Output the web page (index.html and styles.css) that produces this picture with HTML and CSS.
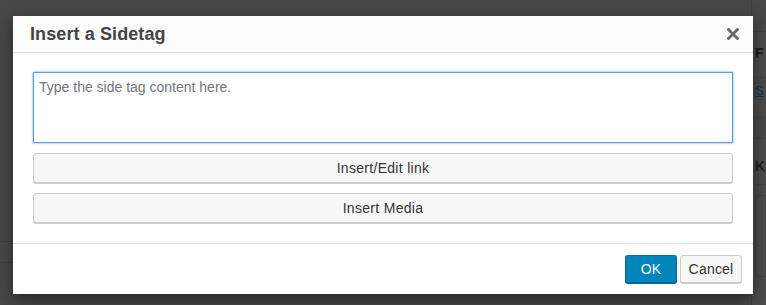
FILE: index.html
```html
<!DOCTYPE html>
<html lang="en">
<head>
  <meta charset="UTF-8">
  <title>Insert a Sidetag</title>
  <link rel="stylesheet" href="styles.css">
</head>
<body>
  <div class="backdrop">
    <div class="bg-main">
      <div class="bg-row"></div>
      <div class="bg-row"></div>
    </div>
    <div class="bg-side">
      <div class="side-box first">
        <div class="side-title">F</div>
        <a class="side-link">S</a>
      </div>
      <div class="side-box second">
        <div class="side-title">K</div>
        <div class="side-inner"></div>
      </div>
    </div>
  </div>

  <div class="modal">
    <div class="modal-head">
      <h1>Insert a Sidetag</h1>
      <button class="close" aria-label="Close">
        <svg width="12" height="12" viewBox="0 0 12 12">
          <path d="M1.5 1.5 L10.5 10.5 M10.5 1.5 L1.5 10.5" stroke="#666" stroke-width="2.8" stroke-linecap="square"/>
        </svg>
      </button>
    </div>
    <div class="modal-body">
      <textarea class="tag-text" placeholder="Type the side tag content here."></textarea>
      <button class="wide-button">Insert/Edit link</button>
      <button class="wide-button">Insert Media</button>
    </div>
    <div class="modal-foot">
      <button class="btn primary">OK</button>
      <button class="btn cancel">Cancel</button>
    </div>
  </div>
</body>
</html>
```

FILE: styles.css
```css
body {
  margin: 0;
  padding: 0;
  background: #484848;
  font-family: 'Liberation Sans', Arial, sans-serif;
  overflow: hidden;
}

/* page behind the overlay */
.backdrop {
  display: flex;
  height: 305px;
}

.bg-main {
  flex: 1;
  display: flex;
  flex-direction: column;
  justify-content: flex-end;
  padding-bottom: 22px;
}

.bg-row {
  height: 20px;
  border-top: 1px solid #3f3f3f;
}

.bg-side {
  width: 14px;
  padding-top: 31px;
  border-left: 1px solid #404040;
}

.side-box {
  background: #4c4c4c;
  border-top: 1px solid #424242;
  padding-left: 3px;
  overflow: hidden;
  font-size: 14px;
  color: #1c1c1c;
}

.side-box.first {
  height: 84px;
}

.side-box.second {
  margin-top: 22px;
  height: 180px;
}

.side-title {
  font-weight: bold;
  padding-top: 13px;
  height: 32px;
  border-bottom: 1px solid #444;
}

.second .side-title {
  padding-top: 19px;
  height: 26px;
}

.side-link {
  display: block;
  margin-top: 5px;
  color: #0e3550;
  text-decoration: underline;
  font-size: 13px;
}

.side-inner {
  margin-top: 10px;
  border: 1px solid #444;
  height: 80px;
}

/* dialog */
.modal {
  position: absolute;
  top: 16px;
  left: 13px;
  width: 740px;
  height: 278px;
  background: #fff;
  box-shadow: 0 5px 15px rgba(0, 0, 0, 0.5);
  display: flex;
  flex-direction: column;
}

.modal-head {
  height: 36px;
  background: #fcfcfc;
  border-bottom: 1px solid #ddd;
  display: flex;
  align-items: center;
  justify-content: space-between;
  padding: 0 14px 0 17px;
}

.modal-head h1 {
  margin: 0;
  font-size: 18px;
  font-weight: bold;
  color: #444;
  letter-spacing: 0.1px;
}

.close {
  border: none;
  background: none;
  padding: 0;
  width: 12px;
  height: 12px;
  display: flex;
  cursor: pointer;
}

.modal-body {
  flex: 1;
  padding: 19px 20px 0 20px;
  display: flex;
  flex-direction: column;
  gap: 10px;
}

.tag-text {
  box-sizing: border-box;
  height: 71px;
  margin: 0;
  border: 1px solid #5b9dd9;
  box-shadow: 0 0 2px rgba(30, 140, 190, 0.8);
  padding: 5px 5px;
  font-family: 'Liberation Sans', Arial, sans-serif;
  font-size: 14px;
  line-height: 19px;
  resize: none;
  outline: none;
  color: #32373c;
}

.tag-text::placeholder {
  color: #72777c;
}

.wide-button {
  height: 30px;
  margin: 0;
  border: 1px solid #ccc;
  border-radius: 3px;
  background: #f7f7f7;
  box-shadow: 0 1px 0 #ccc;
  font-family: 'Liberation Sans', Arial, sans-serif;
  font-size: 14px;
  letter-spacing: 0.3px;
  color: #333;
  cursor: pointer;
}

.modal-foot {
  height: 50px;
  border-top: 1px solid #ddd;
  display: flex;
  justify-content: flex-end;
  align-items: center;
  gap: 3px;
  padding: 0 11px;
}

.btn {
  box-sizing: border-box;
  height: 28px;
  padding: 0;
  margin: 0;
  border: 1px solid #ccc;
  border-radius: 3px;
  background: #f7f7f7;
  box-shadow: 0 1px 0 #ccc;
  font-family: 'Liberation Sans', Arial, sans-serif;
  font-size: 14px;
  letter-spacing: 0.2px;
  color: #333;
  cursor: pointer;
}

.btn.cancel {
  width: 62px;
}

.btn.primary {
  width: 52px;
  background: #0085ba;
  border-color: #0073aa #006799 #006799;
  box-shadow: 0 1px 0 #006799;
  color: #fff;
}
```
